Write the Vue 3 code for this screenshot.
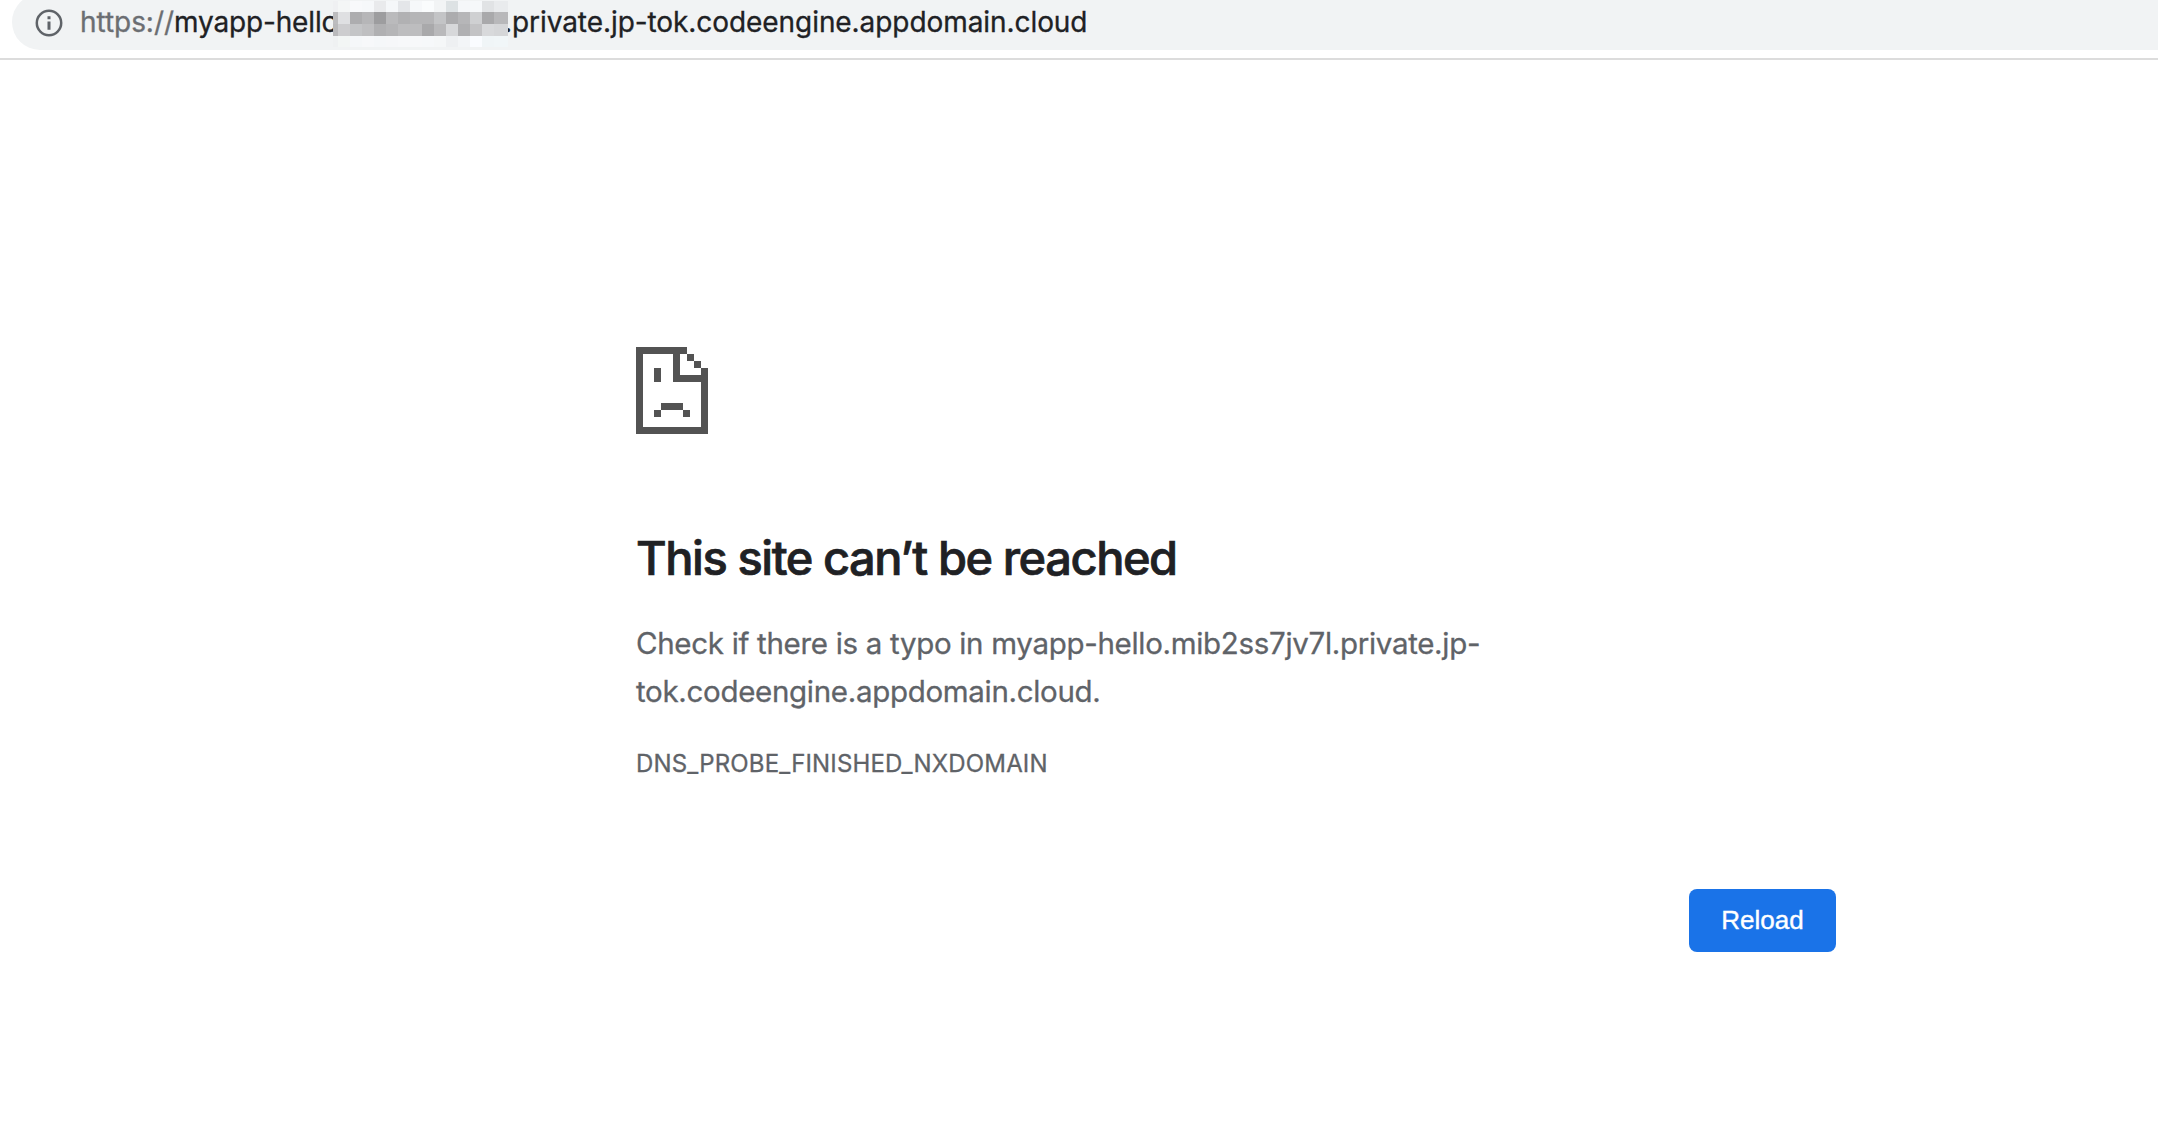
<script setup>
    import { ref } from 'vue';

    const host = 'myapp-hello.mib2ss7jv7l.private.jp-tok.codeengine.appdomain.cloud';
    const errorCode = ref('DNS_PROBE_FINISHED_NXDOMAIN');

    // Grey shades of the blocks that hide a part of the address
    const mosaic = [
        ['#eff0f2', '#f4f6f6', '#f8f9fb', '#f6f8fa', '#e9eaec', '#f5f7f9', '#e4e6e9', '#f6f8fa', '#fafcfd', '#f2f4f5', '#dde2e4', '#f5f7f9', '#f6f8fa', '#e1e3e5', '#e9ebed'],
        ['#bcbcbe', '#dfe0e2', '#adadaf', '#b6b6b8', '#9d9d9f', '#bababc', '#b1b1b3', '#b5b5b7', '#b5b5b7', '#c3c4c6', '#acacae', '#b6b6b8', '#cfd0d2', '#a9a9ab', '#b8b8ba'],
        ['#b9b9bb', '#cdcdcf', '#c4c5c7', '#bfbfc1', '#b0b0b2', '#b5b5b7', '#bdbdbf', '#bdbdbf', '#a9a9ab', '#b9b9bb', '#d7d8da', '#b0b0b2', '#c3c3c5', '#d8d9db', '#d5d6d8'],
        ['#eff1f2', '#f3f6f5', '#f5f7f9', '#f7f8fa', '#f5f7f9', '#f6f7f9', '#f7f8fa', '#f7f8fa', '#f6f8fa', '#f5f7f8', '#eef0f2', '#f3f5f7', '#fafcff', '#f0f5f7', '#f1f6f8'],
    ];

    const reload = () => {
        window.location.reload();
    }
</script>

<template>
    <div class="browser">
        <header class="toolbar">
            <div class="address">
                <svg class="info" viewBox="0 0 28 28">
                    <circle cx="14" cy="14" r="12.2" fill="none" stroke="#5f6368" stroke-width="2.5" />
                    <path d="M12.5 7.2h3v3h-3zM12.5 12.4h3v8.4h-3z" fill="#5f6368" />
                </svg>
                <span class="scheme">https://</span>
                <span class="start">myapp-hello</span>
                <div class="mosaic">
                    <template v-for="(row, r) in mosaic" :key="r">
                        <i v-for="(shade, c) in row" :key="c" :style="{ backgroundColor: shade }"></i>
                    </template>
                </div>
                <span class="rest">.private.jp-tok.codeengine.appdomain.cloud</span>
            </div>
        </header>

        <main class="error">
            <!-- Sad page icon -->
            <svg class="sad" viewBox="0 0 72 87" fill="#535353" shape-rendering="crispEdges">
                <path d="M0 0H51V7H44V28H65V21H72V87H0ZM7 7V80H65V35H37V7Z" fill-rule="evenodd" />
                <path d="M51 7h7v7h-7zM58 14h7v7h-7zM18 21h7v14h-7zM25 56h22v7H25zM18 63h7v7h-7zM47 63h7v7h-7z" />
            </svg>
            <h1>This site can’t be reached</h1>
            <p class="summary">Check if there is a typo in {{ host }}.</p>
            <div class="code">{{ errorCode }}</div>
            <button @click="reload">Reload</button>
        </main>
    </div>
</template>

<style>
    body {
        margin: 0;
        background-color: #fff;
    }
</style>

<style scoped>
    .browser {
        height: 1136px;
        overflow: hidden;
        font-family: Inter, "Liberation Sans", sans-serif;
        -webkit-text-stroke-width: 0.3px;
    }

    .toolbar {
        display: flex;
        align-items: flex-end;
        box-sizing: border-box;
        height: 60px;
        padding: 0 0 8px 12px;
        border-bottom: 2px solid #dcdcdc;
    }

    .address {
        flex: 1;
        display: flex;
        align-items: center;
        box-sizing: border-box;
        height: 56px;
        padding-left: 22px;
        border-radius: 28px 0 0 28px;
        background-color: #f1f3f4;
        color: #202124;
        font-size: 28px;
        line-height: 34px;
        white-space: nowrap;
    }

    .info {
        flex: none;
        width: 28px;
        height: 28px;
        margin: 1px 17px 0 1px;
    }

    .scheme {
        width: 94px;
        color: #6b6e72;
        letter-spacing: -0.05px;
    }

    /* the last letter goes under the mosaic */
    .start {
        width: 159px;
        letter-spacing: -0.15px;
    }

    .mosaic {
        position: relative;
        z-index: 1;
        flex: none;
        display: grid;
        grid-template-columns: 5px repeat(13, 12px) 14px;
        grid-template-rows: 11px 12px 12px 11px;
        width: 175px;
        margin-top: 4px;
    }

    .rest {
        margin-left: -4px;
        letter-spacing: -0.07px;
    }

    .error {
        display: flex;
        flex-direction: column;
        width: 1200px;
        margin: 287px 0 0 636px;
        color: #5f6368;
    }

    .sad {
        width: 72px;
        height: 87px;
    }

    h1 {
        margin: 95px 0 0;
        color: #202124;
        font-size: 47px;
        font-weight: 500;
        line-height: 58px;
        letter-spacing: -1.45px;
        -webkit-text-stroke-width: 0.7px;
    }

    .summary {
        width: 900px;
        margin: 32px 0 0;
        font-size: 29.5px;
        line-height: 48px;
        letter-spacing: -0.31px;
    }

    .code {
        margin-top: 31px;
        font-size: 24px;
        line-height: 36px;
        letter-spacing: 0.16px;
    }

    button {
        align-self: flex-end;
        width: 147px;
        height: 63px;
        margin-top: 107px;
        padding: 0;
        border: none;
        border-radius: 8px;
        background-color: #1a73e8;
        color: #fff;
        font-family: "Liberation Sans", Arial, sans-serif;
        font-size: 26px;
        -webkit-text-stroke-width: 0.4px;
    }
</style>
